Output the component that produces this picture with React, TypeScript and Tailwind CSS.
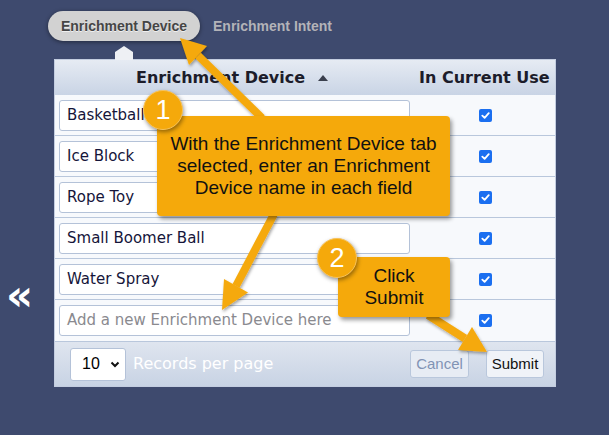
import { Fragment } from "react";

const rows = ["Basketball", "Ice Block", "Rope Toy", "Small Boomer Ball", "Water Spray"];

function Check() {
  return (
    <span className="flex h-[13px] w-[13px] items-center justify-center rounded-[2px] bg-[#1b6ff0]">
      <svg width="9" height="9" viewBox="0 0 10 10">
        <path d="M1.5 5.2 L4 7.6 L8.6 2.4" stroke="white" strokeWidth="2" fill="none" strokeLinecap="round" strokeLinejoin="round" />
      </svg>
    </span>
  );
}

// arrow as shaft + head, coordinates in page pixels
function Arrow({ tail, base, tip, w1, w2 }: { tail: number[]; base: number[]; tip: number[]; w1: number[]; w2: number[] }) {
  return (
    <Fragment>
      <line x1={tail[0]} y1={tail[1]} x2={base[0]} y2={base[1]} stroke="#f5a90b" strokeWidth="8" />
      <polygon points={`${tip[0]},${tip[1]} ${w1[0]},${w1[1]} ${w2[0]},${w2[1]}`} fill="#f5a90b" />
    </Fragment>
  );
}

export default function App() {
  return (
    <div className="relative h-[435px] w-[609px] overflow-hidden bg-[#3e4a6e] font-['DejaVu_Sans',sans-serif]">
      {/* tabs */}
      <div className="flex items-center gap-[13px] pl-[48px] pt-[11px] font-['Liberation_Sans',Arial,sans-serif] text-[14px] font-bold">
        <div className="flex h-[30px] w-[152px] items-center justify-center rounded-full bg-[#d2d2d2] text-[#454545] shadow-[0_1px_4px_rgba(0,0,0,0.45)] [text-shadow:0_1px_0_rgba(255,255,255,0.7)]">
          Enrichment Device
        </div>
        <div className="text-[#b3b3b8]">Enrichment Intent</div>
      </div>

      <div className="mt-[18px] flex">
        <div className="w-[54px] pt-[216px] pl-[6px] text-[42px] font-bold leading-[42px] text-white">«</div>

        {/* panel */}
        <div className="relative w-[502px] border border-[#c3cde0] bg-[#f7f9fc]">
          <svg className="absolute left-[60px] top-[-14px]" width="18" height="14" viewBox="0 0 18 14">
            <polygon points="0,14 0,6 9,0 18,6 18,14" fill="#eef0f4" />
          </svg>

          <div className="flex h-[35px] items-center bg-gradient-to-b from-[#e6ebf3] to-[#c9d4e5] text-[16px] font-bold text-[#1c1c2a]">
            <div className="flex w-[360px] items-center justify-center gap-[13px] pr-[6px]">
              <span>Enrichment Device</span>
              <svg width="10" height="6" viewBox="0 0 10 6">
                <polygon points="0,6 5,0 10,6" fill="#3a3f4d" />
              </svg>
            </div>
            <div className="flex-1 whitespace-nowrap pl-[4px]">In Current Use</div>
          </div>

          {rows.map((r) => (
            <div key={r} className="flex h-[41px] items-center border-b border-[#b9c7dc]">
              <div className="w-[360px] pl-[4px]">
                <div className="flex h-[31px] w-[351px] items-center rounded-[3px] border border-[#b4c2d8] bg-white pl-[7px] text-[15px] text-[#15153a]">
                  {r}
                </div>
              </div>
              <div className="flex flex-1 justify-center">
                <Check />
              </div>
            </div>
          ))}
          <div className="flex h-[41px] items-center">
            <div className="w-[360px] pl-[4px]">
              <div className="flex h-[31px] w-[351px] items-center rounded-[3px] border border-[#b4c2d8] bg-white pl-[7px] text-[15px] text-[#8a8a8f]">
                Add a new Enrichment Device here
              </div>
            </div>
            <div className="flex flex-1 justify-center">
              <Check />
            </div>
          </div>

          {/* footer */}
          <div className="flex h-[45px] items-center border-t border-[#b9c7dc] bg-gradient-to-b from-[#dfe5ef] to-[#c8d3e4] pl-[15px] pr-[11px]">
            <div className="flex h-[33px] w-[56px] items-center gap-[10px] rounded-[3px] border border-[#b4c2d8] bg-white pl-[11px] font-['Liberation_Sans',Arial,sans-serif] text-[16px] text-black">
              <span>10</span>
              <svg width="10" height="7" viewBox="0 0 10 7">
                <path d="M1.5 1.5 L5 5 L8.5 1.5" stroke="#111" strokeWidth="2" fill="none" />
              </svg>
            </div>
            <span className="ml-[7px] text-[16px] text-white">Records per page</span>
            <div className="ml-auto flex gap-[17px] font-['Liberation_Sans',Arial,sans-serif] text-[15px]">
              <div className="flex h-[28px] w-[59px] items-center justify-center rounded-[3px] border border-[#b9c7dc] bg-[#e7ecf4] text-[#8193b4]">
                Cancel
              </div>
              <div className="flex h-[28px] w-[58px] items-center justify-center rounded-[3px] border border-[#b9c7dc] bg-[#f0f3f8] text-[#111]">
                Submit
              </div>
            </div>
          </div>
        </div>
      </div>

      {/* annotation overlay */}
      <svg className="pointer-events-none absolute left-0 top-0" width="609" height="435">
        <defs>
          <filter id="sh" x="-20%" y="-20%" width="140%" height="140%">
            <feDropShadow dx="1" dy="2" stdDeviation="1.5" floodColor="#000" floodOpacity="0.35" />
          </filter>
        </defs>
        <g filter="url(#sh)">
          <Arrow tail={[262, 118]} base={[198, 55.5]} tip={[180, 38]} w1={[207, 46]} w2={[189, 65]} />
          <Arrow tail={[274, 214]} base={[236, 286]} tip={[222, 310]} w1={[248, 292.5]} w2={[224, 279]} />
          <Arrow tail={[428, 315]} base={[465, 338.5]} tip={[487, 352]} w1={[458, 350]} w2={[472, 327]} />
        </g>
      </svg>

      <div className="absolute left-[157px] top-[116px] flex h-[100px] w-[293px] flex-col items-center justify-center rounded-[4px] bg-[#f5a90b] font-['Liberation_Sans',Arial,sans-serif] text-[19px] leading-[22px] text-[#111] shadow-[2px_3px_4px_rgba(0,0,0,0.4)]">
        <span>With the Enrichment Device tab</span>
        <span>selected, enter an Enrichment</span>
        <span>Device name in each field</span>
      </div>
      <div className="absolute left-[143px] top-[90px] flex h-[40px] w-[40px] items-center justify-center rounded-full border border-[#f8c35a] bg-[#f5a90b] font-['Liberation_Sans',Arial,sans-serif] text-[27px] text-white shadow-[1px_2px_4px_rgba(0,0,0,0.4)]">
        1
      </div>

      <div className="absolute left-[338px] top-[257px] flex h-[60px] w-[112px] flex-col items-center justify-center rounded-[4px] bg-[#f5a90b] font-['Liberation_Sans',Arial,sans-serif] text-[19px] leading-[22px] text-[#111] shadow-[2px_3px_4px_rgba(0,0,0,0.4)]">
        <span>Click</span>
        <span>Submit</span>
      </div>
      <div className="absolute left-[317px] top-[238px] flex h-[40px] w-[40px] items-center justify-center rounded-full border border-[#f8c35a] bg-[#f5a90b] font-['Liberation_Sans',Arial,sans-serif] text-[27px] text-white shadow-[1px_2px_4px_rgba(0,0,0,0.4)]">
        2
      </div>
    </div>
  );
}
